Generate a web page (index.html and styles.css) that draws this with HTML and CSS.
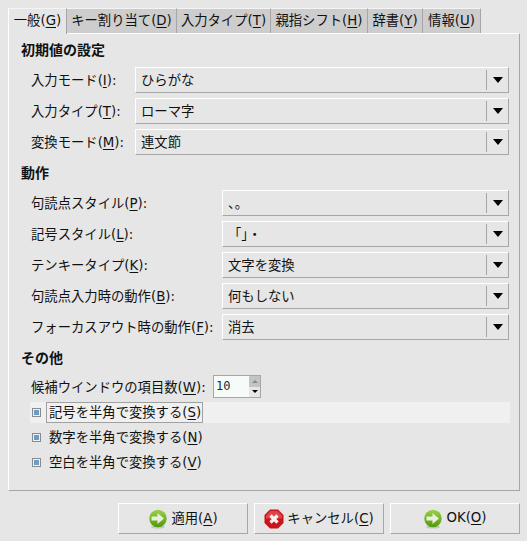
FILE: index.html
```html
<!DOCTYPE html>
<html lang="ja">
<head>
    <meta charset="UTF-8">
    <meta name="viewport" content="width=device-width, initial-scale=1.0">
    <title>設定</title>
    <link rel="stylesheet" href="styles.css">
</head>
<body>
    <div class="tabs">
        <div class="tab active">一般(<u>G</u>)</div>
        <div class="tab t2">キー割り当て(<u>D</u>)</div>
        <div class="tab t3">入力タイプ(<u>T</u>)</div>
        <div class="tab t4">親指シフト(<u>H</u>)</div>
        <div class="tab t5">辞書(<u>Y</u>)</div>
        <div class="tab t6">情報(<u>U</u>)</div>
    </div>
    <div class="panel">
        <h2>初期値の設定</h2>
        <div class="rows short">
            <label>入力モード(<u>I</u>):</label>
            <div class="combo"><span>ひらがな</span><i class="sep"></i><i class="arrow"></i></div>
            <label>入力タイプ(<u>T</u>):</label>
            <div class="combo"><span>ローマ字</span><i class="sep"></i><i class="arrow"></i></div>
            <label>変換モード(<u>M</u>):</label>
            <div class="combo"><span>連文節</span><i class="sep"></i><i class="arrow"></i></div>
        </div>
        <h2 class="later">動作</h2>
        <div class="rows long">
            <label>句読点スタイル(<u>P</u>):</label>
            <div class="combo"><span>、。</span><i class="sep"></i><i class="arrow"></i></div>
            <label>記号スタイル(<u>L</u>):</label>
            <div class="combo"><span>「」・</span><i class="sep"></i><i class="arrow"></i></div>
            <label>テンキータイプ(<u>K</u>):</label>
            <div class="combo"><span>文字を変換</span><i class="sep"></i><i class="arrow"></i></div>
            <label>句読点入力時の動作(<u>B</u>):</label>
            <div class="combo"><span>何もしない</span><i class="sep"></i><i class="arrow"></i></div>
            <label>フォーカスアウト時の動作(<u>F</u>):</label>
            <div class="combo"><span>消去</span><i class="sep"></i><i class="arrow"></i></div>
        </div>
        <h2 class="later">その他</h2>
        <div class="spin-row">
            <label>候補ウインドウの項目数(<u>W</u>):</label>
            <div class="spin">
                <span class="spin-value">10</span>
                <div class="spin-btns">
                    <div class="spin-up"><i></i></div>
                    <div class="spin-down"><i></i></div>
                </div>
            </div>
        </div>
        <div class="check hover"><i class="box"></i><span class="focus">記号を半角で変換する(<u>S</u>)</span></div>
        <div class="check"><i class="box"></i><span>数字を半角で変換する(<u>N</u>)</span></div>
        <div class="check"><i class="box"></i><span>空白を半角で変換する(<u>V</u>)</span></div>
    </div>
    <div class="buttons">
        <button>
            <svg class="icon" viewBox="0 0 20 20">
                <defs>
                    <linearGradient id="go" x1="0" y1="0" x2="0" y2="1">
                        <stop offset="0" stop-color="#9bd04a"/>
                        <stop offset="1" stop-color="#4f9a0a"/>
                    </linearGradient>
                </defs>
                <ellipse cx="10" cy="18" rx="7" ry="1.6" fill="#c4c4c4"/>
                <circle cx="10" cy="9.500" r="8.700" fill="url(#go)"/>
                <path d="M3.500 7.500h6V4l6.500 5.500-6.500 5.500v-3.500h-6z" fill="#e8efdc"/>
            </svg>
            <span>適用(<u>A</u>)</span>
        </button>
        <button>
            <svg class="icon" viewBox="0 0 20 20">
                <path d="M6 .5h8L19.500 6v8L14 19.500H6L.5 14V6z" fill="#c8141a"/>
                <path d="M6.500 2h7L18 6.500v3H2v-3z" fill="#e0444a"/>
                <path d="M6.500 6.500l7 7M13.500 6.500l-7 7" stroke="#f6f2f2" stroke-width="3.200" fill="none"/>
            </svg>
            <span>キャンセル(<u>C</u>)</span>
        </button>
        <button>
            <svg class="icon" viewBox="0 0 20 20">
                <ellipse cx="10" cy="18" rx="7" ry="1.6" fill="#c4c4c4"/>
                <circle cx="10" cy="9.500" r="8.700" fill="url(#go)"/>
                <path d="M3.500 7.500h6V4l6.500 5.500-6.500 5.500v-3.500h-6z" fill="#e8efdc"/>
            </svg>
            <span>OK(<u>O</u>)</span>
        </button>
    </div>
</body>
</html>
```

FILE: styles.css
```css
* {
    box-sizing: border-box;
}
body {
    font-family: "DejaVu Sans", "Noto Sans CJK JP", sans-serif;
    font-size: 13.33px;
    background-color: #e6e6e6;
    color: #111;
    margin: 0;
    padding: 8px 7px 0 8px;
    height: 541px;
    overflow: hidden;
}
u {
    text-underline-offset: 2px;
}
.tabs {
    display: flex;
    height: 25px;
}
.tab {
    width: 59px;
    height: 25px;
    background-color: #cdcdcd;
    border-top: 1px solid #f4f4f4;
    border-right: 1px solid #a6a6a6;
    line-height: 24px;
    text-align: center;
    white-space: nowrap;
}
.tab.active {
    background-color: #e6e6e6;
    border-left: 1px solid #fff;
    height: 26px;
    position: relative;
    z-index: 1;
}
.t2 { width: 110px; }
.t3 { width: 94px; }
.t4 { width: 97px; }
.t5 { width: 55px; }
.t6 { width: 58px; }
.panel {
    width: 512px;
    height: 458px;
    border: 1px solid #a6a6a6;
    border-top-color: #fff;
    border-left-color: #fff;
    padding: 8px 9px 0 12px;
}
h2 {
    font-size: 14px;
    font-weight: bold;
    margin: 0 0 8px;
    line-height: 17px;
}
h2.later {
    margin-top: 10px;
}
label {
    display: block;
    white-space: nowrap;
    padding: 2px 0 0 10px;
    line-height: 22px;
}
.rows {
    display: grid;
    row-gap: 5px;
    grid-auto-rows: 26px;
    align-items: center;
}
.short {
    grid-template-columns: 114px 374px;
}
.long {
    grid-template-columns: 201px 287px;
}
.combo {
    height: 26px;
    display: flex;
    align-items: center;
    border: 1px solid #a6a6a6;
    border-top-color: #fff;
    border-left-color: #fff;
}
.combo span {
    flex: 1;
    padding: 2px 0 0 5px;
    line-height: 22px;
}
.sep {
    width: 1px;
    height: 20px;
    background-color: #a6a6a6;
    margin-right: 6px;
}
.arrow {
    width: 0;
    height: 0;
    margin-right: 5px;
    border-left: 5px solid transparent;
    border-right: 5px solid transparent;
    border-top: 6px solid #000;
}
.spin-row {
    display: flex;
    align-items: center;
    height: 23px;
}
.spin-row label {
    width: 192px;
}
.spin {
    width: 48px;
    height: 23px;
    display: flex;
    border: 1px solid #a6a6a6;
    background-color: #f7fbf7;
}
.spin-value {
    flex: 1;
    font-family: "DejaVu Sans Mono", monospace;
    font-size: 12px;
    line-height: 21px;
    padding-left: 2px;
    color: #0d2f4a;
}
.spin-btns {
    width: 11px;
    display: flex;
    flex-direction: column;
}
.spin-up, .spin-down {
    flex: 1;
    display: flex;
    align-items: center;
    justify-content: center;
}
.spin-up {
    background-color: #c4c4c4;
}
.spin-down {
    background-color: #e6e6e6;
}
.spin-up i, .spin-down i {
    width: 0;
    height: 0;
    border-left: 3px solid transparent;
    border-right: 3px solid transparent;
}
.spin-up i {
    border-bottom: 3px solid #8a8a8a;
}
.spin-down i {
    border-top: 3px solid #000;
}
.check {
    display: flex;
    align-items: center;
    height: 21px;
    margin-top: 4px;
    margin-left: 9px;
    padding-left: 2px;
}
.check.hover {
    background-color: #f0f0f0;
}
.box {
    width: 9px;
    height: 9px;
    border: 1px solid #8a8a8a;
    background-color: #6c9ccc;
    box-shadow: inset 0 0 0 1px #eef2f6;
    margin-right: 5px;
}
.check span {
    padding: 0 1px 0 2px;
    line-height: 19px;
    border: 1px solid transparent;
}
.check .focus {
    border-color: #a0a0a0;
}
.buttons {
    display: flex;
    gap: 6px;
    margin: 12px 0 0 110px;
}
button {
    width: 130px;
    height: 31px;
    font: inherit;
    color: inherit;
    padding: 0;
    background-color: #e6e6e6;
    border: 1px solid #a6a6a6;
    border-top-color: #fff;
    border-left-color: #fff;
    display: flex;
    align-items: center;
    justify-content: center;
    gap: 3px;
}
button span {
    padding-bottom: 3px;
}
.icon {
    width: 20px;
    height: 20px;
}
```
